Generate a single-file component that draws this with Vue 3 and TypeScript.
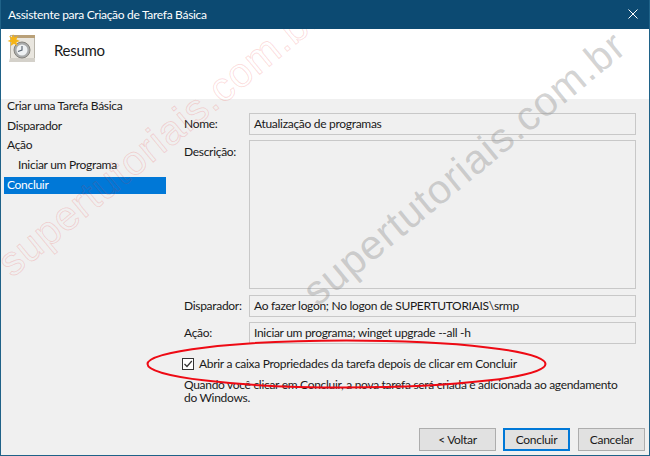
<script setup lang="ts">
const steps = [
  { label: 'Criar uma Tarefa Básica', sub: false, active: false },
  { label: 'Disparador', sub: false, active: false },
  { label: 'Ação', sub: false, active: false },
  { label: 'Iniciar um Programa', sub: true, active: false },
  { label: 'Concluir', sub: false, active: true },
]
</script>

<template>
  <div class="window">
    <header class="titlebar">
      <span>Assistente para Criação de Tarefa Básica</span>
      <svg class="close" width="10" height="10" viewBox="0 0 10 10"><path d="M.5.5l9 9M9.5.5l-9 9" stroke="#fff" stroke-width="1" fill="none" /></svg>
    </header>
    <section class="banner">
      <svg class="wizard-icon" width="32" height="32" viewBox="0 0 32 32">
        <rect x="4.500" y="2.500" width="24" height="26" fill="#e9e6df" stroke="#b9b5ab" />
        <rect x="6" y="2" width="23" height="3" fill="#b9a078" />
        <path d="M4 25h25v4H3z" fill="#d4d1ca" />
        <circle cx="16" cy="17" r="8" fill="#a9abab" stroke="#85837d" />
        <circle cx="16" cy="17" r="5.500" fill="#eef1f3" />
        <path d="M16 13v4l-4 1.500" stroke="#5f6a76" stroke-width="1.200" fill="none" />
        <path d="M7 1l1.400 3.400L12 3 10.400 6.400 14 8l-3.600 1.200L11.500 13 8 10.800 4.600 13l.8-3.800L1.500 8l3.700-1.600L3 3l3.400 1.400z" fill="#f5b417" />
      </svg>
      <h1>Resumo</h1>
    </section>
    <main class="body">
      <nav class="steps">
        <div v-for="s in steps" :key="s.label" class="step" :class="{ sub: s.sub, active: s.active }">{{ s.label }}</div>
      </nav>
      <div class="content">
        <div class="row"><label>Nome:</label><div class="field">Atualização de programas</div></div>
        <div class="row desc"><label>Descrição:</label><div class="field tall"></div></div>
        <div class="row"><label>Disparador:</label><div class="field">Ao fazer logon; No logon de SUPERTUTORIAIS\srmp</div></div>
        <div class="row last"><label>Ação:</label><div class="field">Iniciar um programa; winget upgrade --all -h</div></div>
        <div class="check">
          <svg width="12" height="12" viewBox="0 0 12 12"><rect x=".5" y=".5" width="11" height="11" fill="#fff" stroke="#333" /><path d="M2.500 6l2.500 2.500L9.800 3" stroke="#333" stroke-width="1.200" fill="none" /></svg>
          <span>Abrir a caixa Propriedades da tarefa depois de clicar em Concluir</span>
        </div>
        <p class="note">Quando você clicar em Concluir, a nova tarefa será criada e adicionada ao agendamento do Windows.</p>
      </div>
    </main>
    <footer class="actions">
      <button class="back">&lt; Voltar</button>
      <button class="primary">Concluir</button>
      <button class="cancel">Cancelar</button>
    </footer>

    <div class="mark red">supertutoriais.com.br</div>
    <div class="mark gray">supertutoriais.com.br</div>
    <svg class="ring" width="650" height="456" viewBox="0 0 650 456"><ellipse cx="346.500" cy="364" rx="199" ry="23.500" fill="none" stroke="#ee0a14" stroke-width="2" /></svg>
  </div>
</template>

<style>
body { margin: 0; }
</style>

<style scoped>
.window {
  position: relative;
  width: 650px;
  height: 456px;
  overflow: hidden;
  box-sizing: border-box;
  display: flex;
  flex-direction: column;
  background: #f0f0f0;
  border: 1px solid #1f6288;
  border-top: 0;
  font: 12px/16px Lato, sans-serif;
  letter-spacing: -0.3px;
  color: #1a1a1a;
}
.titlebar {
  position: relative;
  z-index: 1;
  height: 29px;
  flex: none;
  display: flex;
  align-items: center;
  justify-content: space-between;
  padding: 0 11px 0 7px;
  background: #0c4a72;
  color: #fff;
  font-size: 12px;
}
.close { margin-top: -1px; }
.banner {
  height: 66px;
  flex: none;
  background: #fff;
  display: flex;
  align-items: flex-start;
  padding: 4px 0 0 5px;
}
.wizard-icon { flex: none; }
.banner h1 {
  margin: 7px 0 0 16px;
  font-size: 15px;
  line-height: 20px;
  font-weight: 400;
}
.body {
  flex: 1;
  display: flex;
  min-height: 0;
}
.steps {
  width: 162px;
  margin-left: 3px;
  margin-top: -3px;
  flex: none;
}
.step {
  height: 19.700px;
  line-height: 16px;
  padding: 0 0 0 3px;
  display: flex;
  align-items: center;
}
.step.sub { padding-left: 14px; }
.step.active {
  height: 17px;
  margin-top: 2px;
  background: #0078d7;
  color: #fff;
}
.content {
  width: 452px;
  margin-left: 18px;
  padding-top: 14px;
}
.row {
  display: flex;
  align-items: center;
  margin-bottom: 5px;
}
.row label { width: 65px; flex: none; }
.row.desc { align-items: flex-start; margin-bottom: 6px; }
.row.desc label { padding-top: 4px; }
.row.last { margin-bottom: 14px; }
.field {
  width: 387px;
  height: 22px;
  box-sizing: border-box;
  border: 1px solid #c8c8c8;
  background: #f0f0f0;
  padding: 0 4px;
  line-height: 19px;
  white-space: nowrap;
}
.field.tall { height: 149px; }
.check {
  display: flex;
  align-items: center;
  gap: 5px;
  margin-left: -2px;
  height: 12px;
}
.check svg { flex: none; }
.note {
  margin: 8px 0 0 0;
  width: 440px;
  line-height: 13px;
}
.actions {
  flex: none;
  height: 27px;
  display: flex;
  padding-left: 418px;
  box-sizing: border-box;
}
button {
  height: 23px;
  padding: 0;
  box-sizing: border-box;
  background: #e1e1e1;
  border: 1px solid #adadad;
  font: inherit;
  letter-spacing: inherit;
  color: inherit;
}
.back { width: 77px; margin-right: 7px; }
.primary { width: 67px; margin-right: 8px; border: 2px solid #0078d7; }
.cancel { width: 67px; }
.mark {
  position: absolute;
  white-space: nowrap;
  pointer-events: none;
  font-family: "Liberation Sans", sans-serif;
  font-size: 41px;
  line-height: 40px;
  letter-spacing: 1px;
  transform-origin: 0 100%;
  transform: rotate(-39.500deg);
}
.red {
  left: 15px;
  top: 243px;
  color: transparent;
  -webkit-text-stroke: 1px rgba(238, 40, 40, .16);
}
.gray {
  left: 320px;
  top: 272px;
  color: rgba(150, 150, 150, .42);
}
.ring {
  position: absolute;
  left: -1px;
  top: 0;
  pointer-events: none;
}
</style>
